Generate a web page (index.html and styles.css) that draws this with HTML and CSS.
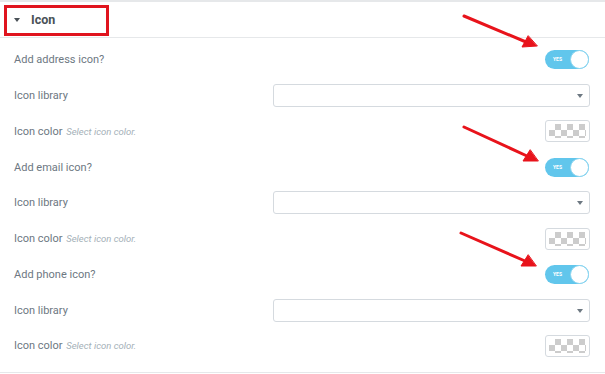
FILE: index.html
```html
<!DOCTYPE html>
<html lang="en">
<head>
    <meta charset="UTF-8">
    <title>Icon section</title>
    <link rel="stylesheet" href="styles.css">
</head>
<body>
    <div class="panel">
        <div class="section-head">
            <span class="caret"></span>
            <span class="section-title">Icon</span>
        </div>

        <div class="controls">
            <div class="row toggle-row">
                <span class="label">Add address icon?</span>
                <span class="switch"><span class="switch-text">YES</span><span class="knob"></span></span>
            </div>
            <div class="row">
                <span class="label">Icon library</span>
                <span class="select"><span class="select-arrow"></span></span>
            </div>
            <div class="row">
                <span class="label">Icon color <em class="hint">Select icon color.</em></span>
                <span class="swatch"></span>
            </div>

            <div class="row toggle-row">
                <span class="label">Add email icon?</span>
                <span class="switch"><span class="switch-text">YES</span><span class="knob"></span></span>
            </div>
            <div class="row">
                <span class="label">Icon library</span>
                <span class="select"><span class="select-arrow"></span></span>
            </div>
            <div class="row">
                <span class="label">Icon color <em class="hint">Select icon color.</em></span>
                <span class="swatch"></span>
            </div>

            <div class="row toggle-row">
                <span class="label">Add phone icon?</span>
                <span class="switch"><span class="switch-text">YES</span><span class="knob"></span></span>
            </div>
            <div class="row">
                <span class="label">Icon library</span>
                <span class="select"><span class="select-arrow"></span></span>
            </div>
            <div class="row">
                <span class="label">Icon color <em class="hint">Select icon color.</em></span>
                <span class="swatch"></span>
            </div>
        </div>

        <!-- annotations drawn over the screenshot -->
        <div class="mark-box"></div>
        <svg class="arrows" width="605" height="374" viewBox="0 0 605 374">
            <g stroke="#e8131b" stroke-width="3" stroke-linecap="round" fill="#e8131b">
                <line x1="464" y1="16" x2="526" y2="42"/>
                <polygon points="537,46 522,47 528,36" stroke-width="1"/>
                <line x1="464" y1="127" x2="527" y2="156"/>
                <polygon points="538,161 523,161 530,150" stroke-width="1"/>
                <line x1="461" y1="233" x2="525" y2="261"/>
                <polygon points="536,266 521,266 528,255" stroke-width="1"/>
            </g>
        </svg>
    </div>
</body>
</html>
```

FILE: styles.css
```css
body {
    margin: 0;
    background: #fff;
    font-family: Roboto, "Liberation Sans", sans-serif;
}
.panel {
    position: relative;
    width: 605px;
    height: 374px;
    border-top: 2px solid #e6e8ea;
    box-sizing: border-box;
}
.section-head {
    height: 35px;
    display: flex;
    align-items: center;
    padding-left: 14px;
    border-bottom: 1px solid #e6e8ea;
}
.caret {
    width: 0;
    height: 0;
    border-left: 3.5px solid transparent;
    border-right: 3.5px solid transparent;
    border-top: 4px solid #495157;
    margin-right: 11px;
    margin-top: 1px;
}
.section-title {
    font-size: 12.5px;
    font-weight: bold;
    color: #495157;
}
.controls {
    padding: 4px 15px 0 14px;
    border-bottom: 1px solid #e6e8ea;
    height: 330px;
}
.row {
    height: 35.75px;
    display: flex;
    align-items: center;
    justify-content: space-between;
}
.label {
    font-size: 11px;
    color: #6d7882;
}
.hint {
    font-size: 9.5px;
    color: #a4afb7;
    margin-left: 1px;
}
.switch {
    position: relative;
    width: 44px;
    height: 19px;
    border-radius: 10px;
    background: #61c6ec;
    box-sizing: border-box;
    margin-right: 1px;
}
.switch-text {
    position: absolute;
    left: 8px;
    top: 6px;
    font-size: 5px;
    font-weight: bold;
    color: #fff;
}
.knob {
    position: absolute;
    right: 0;
    top: 0;
    width: 19px;
    height: 19px;
    border-radius: 50%;
    background: #fff;
    border: 1px solid #8bd5f0;
    box-sizing: border-box;
}
.select {
    position: relative;
    width: 317px;
    height: 23px;
    border: 1px solid #d5dadf;
    border-radius: 3px;
    box-sizing: border-box;
}
.select-arrow {
    position: absolute;
    right: 6px;
    top: 9px;
    width: 0;
    height: 0;
    border-left: 3.5px solid transparent;
    border-right: 3.5px solid transparent;
    border-top: 4px solid #6d7882;
}
.swatch {
    width: 45px;
    height: 22px;
    border: 1px solid #d5dadf;
    border-radius: 3px;
    box-sizing: border-box;
    background-color: #fff;
    background-image:
        linear-gradient(45deg, #ccc 25%, transparent 25%, transparent 75%, #ccc 75%),
        linear-gradient(45deg, #ccc 25%, transparent 25%, transparent 75%, #ccc 75%);
    background-size: 12px 12px;
    background-position: 3px 3px, 9px 9px;
    background-clip: content-box;
    padding: 3px;
}
.mark-box {
    position: absolute;
    left: 4px;
    top: 3px;
    width: 105px;
    height: 31px;
    border: 3px solid #e0141e;
    box-sizing: border-box;
}
.arrows {
    position: absolute;
    left: 0;
    top: -2px;
}
```
